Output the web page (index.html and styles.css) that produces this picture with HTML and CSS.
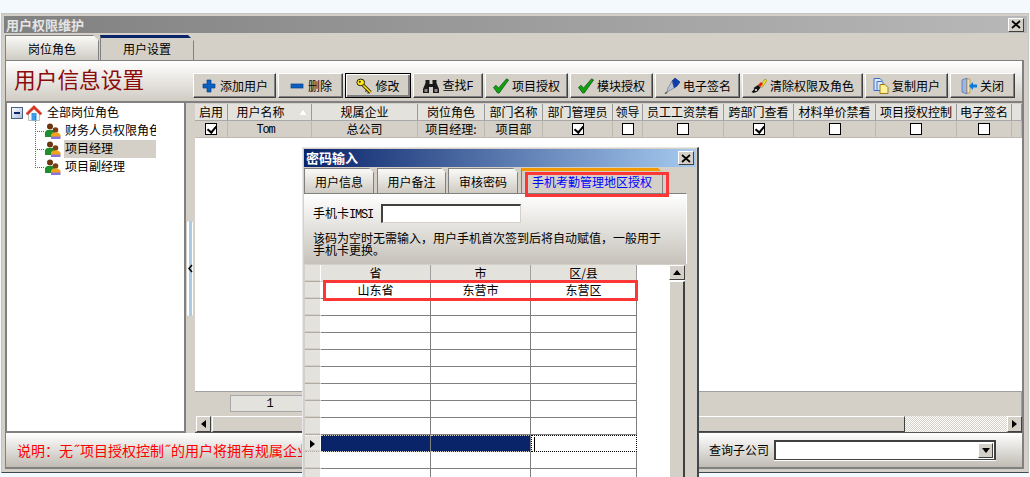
FILE: index.html
```html
<!DOCTYPE html>
<html lang="zh">
<head>
  <meta charset="UTF-8">
  <title>用户权限维护</title>
  <link rel="stylesheet" href="styles.css">
</head>
<body>

  <!-- Icons -->
  <svg class="icon-defs" aria-hidden="true">
    <symbol id="i-plus" viewBox="0 0 16 16"><path d="M6 2h4v4h4v4h-4v4H6v-4H2V6h4z" fill="#0b5fc0" stroke="#0a3f8a" stroke-width=".7"/></symbol>
    <symbol id="i-minus" viewBox="0 0 16 16"><rect x="2" y="6" width="12" height="4" fill="#0b5fc0" stroke="#0a3f8a" stroke-width=".7"/></symbol>
    <symbol id="i-key" viewBox="0 0 16 16"><path d="M7 7l7.5 7.5" stroke="#3a3000" stroke-width="3.2"/><path d="M7 7l7.5 7.5" stroke="#ffe81a" stroke-width="1.6"/><path d="M11 12l-1.6 1.6M13 14l-1.4 1.4" stroke="#3a3000" stroke-width="1.2"/><ellipse cx="4.7" cy="4.4" rx="3.9" ry="3.3" fill="#ffe81a" stroke="#222" stroke-width="1"/><circle cx="3.8" cy="3.8" r="1" fill="#222"/></symbol>
    <symbol id="i-find" viewBox="0 0 16 16"><path d="M2.500 2h4v4h3V2h4v3l2.500 6v4h-6V9H6v6H0v-4l2.500-6z" fill="#1a1a1a"/><rect x="1.500" y="11" width="3" height="3" fill="#8a8a8a"/><rect x="11.500" y="11" width="3" height="3" fill="#8a8a8a"/></symbol>
    <symbol id="i-check" viewBox="0 0 16 16"><path d="M.5 9.5l2.4-2.2 2.7 2.6L13.6.8l2 1.2L6.2 15H4.6z" fill="#0fa30f" stroke="#06490f" stroke-width=".7"/></symbol>
    <symbol id="i-pen" viewBox="0 0 16 16"><path d="M8 3l3-3 5 4-3 4-3 2z" fill="#0b3fb0" stroke="#06226a" stroke-width=".6"/><path d="M8 3l2 7-7 4 1-4z" fill="#b8c4dc" stroke="#667" stroke-width=".6"/><path d="M3 14l-2 2" stroke="#555" stroke-width="1.4"/></symbol>
    <symbol id="i-clear" viewBox="0 0 16 16"><path d="M9 8l5-7 2 1.5-5 7z" fill="#f3e21c" stroke="#7a6a00" stroke-width=".5"/><path d="M7 7l3-3 2 2-3 3z" fill="#e0201a"/><path d="M7 7l2.500 2.500-3 4-4 1.500-2-1 2-2 1-1-1-1z" fill="#111"/><circle cx="5" cy="12" r="1" fill="#fff"/></symbol>
    <symbol id="i-copy" viewBox="0 0 16 16"><path d="M1 .5h6l2 2v10H1z" fill="#dbe8fa" stroke="#3c6fc4"/><path d="M4 3.500h5l1 1v8H4z" fill="#dbe8fa" stroke="#3c6fc4"/><path d="M7 6.500h5l3 3v6H7z" fill="#fdf29a" stroke="#a27a10"/></symbol>
    <symbol id="i-door" viewBox="0 0 16 16"><path d="M1 2l5-2v16l-5-2z" fill="#9db6e4" stroke="#4a68a8" stroke-width=".7"/><path d="M6 1h3v14H6z" fill="#f0e2b0" stroke="#b08a30" stroke-width=".7"/><path d="M8 8l4-4v2.500h4v3h-4V12z" fill="#0b79e0"/></symbol>
    <symbol id="i-home" viewBox="0 0 16 16"><path d="M2.500 8v7.500h11V8L8 3z" fill="#f4f6fa" stroke="#a8a8a0" stroke-width=".7"/><rect x="5.500" y="8" width="5" height="7.500" fill="#3d9be8"/><path d="M0 8.500L8 .5l8 8-1.800 1.300L8 3.800 1.800 9.800z" fill="#e8321c" stroke="#9c1808" stroke-width=".5"/></symbol>
    <symbol id="i-user" viewBox="0 0 17 16"><circle cx="6" cy="3.500" r="3" fill="#6e3610"/><path d="M1 13V9l2-2h6l2 2v5H1z" fill="#1f8f2e"/><circle cx="11.500" cy="7" r="2.800" fill="#7a4014"/><path d="M7 14v-2.500l2-2h5l2.500 2V14z" fill="#f0a21c"/><rect x="7" y="13.500" width="9.500" height="2.500" fill="#8a74d8"/></symbol>
  </svg>

  <div class="window">
    <div class="titlebar">
      <span>用户权限维护</span>
      <span class="close-btn"><svg viewBox="0 0 10 9"><path d="M1 1l8 7M9 1L1 8" stroke="#000" stroke-width="1.700"/></svg></span>
    </div>

    <div class="tabs">
      <div class="tab">岗位角色</div>
      <div class="tab tab--active">用户设置</div>
    </div>

    <div class="panel">
      <!-- Toolbar -->
      <div class="head">
        <div class="head__title">用户信息设置</div>
        <div class="toolbar">
          <div class="btn"><svg class="ico"><use href="#i-plus"/></svg>添加用户</div>
          <div class="btn"><svg class="ico"><use href="#i-minus"/></svg>删除</div>
          <div class="btn btn--focus"><svg class="ico"><use href="#i-key"/></svg>修改</div>
          <div class="btn"><svg class="ico"><use href="#i-find"/></svg><span>查找<span class="mono">F</span></span></div>
          <div class="btn"><svg class="ico"><use href="#i-check"/></svg>项目授权</div>
          <div class="btn"><svg class="ico"><use href="#i-check"/></svg>模块授权</div>
          <div class="btn"><svg class="ico"><use href="#i-pen"/></svg>电子签名</div>
          <div class="btn"><svg class="ico"><use href="#i-clear"/></svg>清除权限及角色</div>
          <div class="btn"><svg class="ico"><use href="#i-copy"/></svg>复制用户</div>
          <div class="btn"><svg class="ico"><use href="#i-door"/></svg>关闭</div>
        </div>
      </div>

      <div class="main">
        <!-- Tree -->
        <div class="tree">
          <div class="tree__root">
            <span class="tree__toggle"></span>
            <svg class="ico"><use href="#i-home"/></svg>
            <span class="tree__text">全部岗位角色</span>
          </div>
          <div class="tree__children">
            <div class="tree__node"><span class="tree__dash"></span><svg class="ico ico--user"><use href="#i-user"/></svg><span class="tree__label">财务人员权限角色</span></div>
            <div class="tree__node"><span class="tree__dash"></span><svg class="ico ico--user"><use href="#i-user"/></svg><span class="tree__label tree__label--selected">项目经理</span></div>
            <div class="tree__node"><span class="tree__dash"></span><svg class="ico ico--user"><use href="#i-user"/></svg><span class="tree__label">项目副经理</span></div>
          </div>
        </div>

        <div class="splitter">
          <div class="splitter__handle"><svg viewBox="0 0 5 9"><path d="M4 1L1 4.500 4 8" fill="none" stroke="#000" stroke-width="1.500"/></svg></div>
        </div>

        <!-- Users grid -->
        <div class="users">
          <div class="users__row users__row--head">
            <div>启用</div>
            <div class="cell-sort">用户名称<span class="sort-mark"></span></div>
            <div>规属企业</div>
            <div>岗位角色</div>
            <div>部门名称</div>
            <div>部门管理员</div>
            <div>领导</div>
            <div>员工工资禁看</div>
            <div>跨部门查看</div>
            <div>材料单价禁看</div>
            <div>项目授权控制</div>
            <div>电子签名</div>
            <div></div>
          </div>
          <div class="users__row">
            <div><span class="cb cb--on"></span></div>
            <div class="mono mono--cell">Tom</div>
            <div>总公司</div>
            <div>项目经理:</div>
            <div>项目部</div>
            <div><span class="cb cb--on"></span></div>
            <div><span class="cb"></span></div>
            <div><span class="cb"></span></div>
            <div><span class="cb cb--on"></span></div>
            <div><span class="cb"></span></div>
            <div><span class="cb"></span></div>
            <div><span class="cb"></span></div>
            <div></div>
          </div>
          <div class="users__blank"></div>
          <div class="users__total"><div class="users__sum mono">1</div></div>
          <div class="hscroll">
            <span class="sbtn"><i class="tri tri--left"></i></span>
            <span class="hscroll__thumb"></span>
            <span class="hscroll__track"></span>
            <span class="sbtn"><i class="tri tri--right"></i></span>
          </div>
        </div>
      </div>

      <!-- Footer -->
      <div class="foot">
        <div class="foot__note">说明：无<span class="foot__quote">˝</span>项目授权控制<span class="foot__quote">˝</span>的用户将拥有规属企业的全部项目权限</div>
        <label class="foot__label">查询子公司</label>
        <div class="combo"><span class="combo__btn"><i class="tri tri--down"></i></span></div>
      </div>
    </div>
  </div>

  <!-- Dialog -->
  <div class="dialog">
    <div class="dialog__title">
      <span>密码输入</span>
      <span class="close-btn close-btn--dialog"><svg viewBox="0 0 10 9"><path d="M1 1l8 7M9 1L1 8" stroke="#000" stroke-width="1.700"/></svg></span>
    </div>
    <div class="dtabs">
      <div class="dtab">用户信息</div>
      <div class="dtab">用户备注</div>
      <div class="dtab">审核密码</div>
      <div class="dtab dtab--active">手机考勤管理地区授权</div>
    </div>
    <div class="dpanel">
      <div class="imsi">
        <span>手机卡<span class="mono">IMSI</span></span>
        <div class="imsi__input"></div>
      </div>
      <p class="dpanel__hint">该码为空时无需输入，用户手机首次签到后将自动赋值，一般用于手机卡更换。</p>
    </div>
    <div class="area">
      <div class="area__table">
        <div class="area__row area__row--head"><div></div><div>省</div><div>市</div><div>区/县</div></div>
        <div class="area__row"><div></div><div>山东省</div><div>东营市</div><div>东营区</div></div>
        <div class="area__row"><div></div><div></div><div></div><div></div></div>
        <div class="area__row"><div></div><div></div><div></div><div></div></div>
        <div class="area__row"><div></div><div></div><div></div><div></div></div>
        <div class="area__row"><div></div><div></div><div></div><div></div></div>
        <div class="area__row"><div></div><div></div><div></div><div></div></div>
        <div class="area__row"><div></div><div></div><div></div><div></div></div>
        <div class="area__row"><div></div><div></div><div></div><div></div></div>
        <div class="area__row"><div></div><div></div><div></div><div></div></div>
        <div class="area__row area__row--current"><div><i class="tri tri--right"></i></div><div></div><div></div><div class="area__edit"><span class="caret"></span></div></div>
        <div class="area__row"><div></div><div></div><div></div><div></div></div>
        <div class="area__row"><div></div><div></div><div></div><div></div></div>
      </div>
      <div class="vscroll">
        <span class="sbtn sbtn--v"><i class="tri tri--up"></i></span>
        <span class="vscroll__thumb"></span>
      </div>
    </div>
    <div class="mark mark--tab"></div>
    <div class="mark mark--row"></div>
  </div>

</body>
</html>
```

FILE: styles.css
```css
* {
  box-sizing: border-box;
}

html, body {
  height: 477px;
}

body {
  margin: 0;
  padding-top: 13px;
  position: relative;
  overflow: hidden;
  background: #f3f9fd;
  color: #000;
  font-family: "Noto Sans CJK SC", "Liberation Sans", sans-serif;
  font-size: 12px;
  line-height: 16px;
}

.icon-defs {
  position: absolute;
  width: 0;
  height: 0;
}

.mono {
  font-family: "Liberation Mono", monospace;
  font-size: 12px;
  letter-spacing: -1.2px;
}

.ico {
  width: 16px;
  height: 16px;
  flex: none;
}

.ico--user {
  width: 17px;
}

/* Window */
.window {
  width: 1028px;
  height: 460px;
  margin-left: 1px;
  padding: 2px;
  background: #d4d0c8;
  border: 1px solid #c4c4c4;
  border-bottom: 1px solid #404850;
}

.titlebar {
  height: 17px;
  margin-right: -1px;
  padding: 0 2px 0 2px;
  display: flex;
  justify-content: space-between;
  align-items: center;
  background: linear-gradient(to right, #808080, #b8b8b8);
  color: #e4e4e4;
  font-size: 13px;
  font-weight: 700;
}

.close-btn {
  width: 16px;
  height: 14px;
  display: flex;
  align-items: center;
  justify-content: center;
  background: #d4d0c8;
  border: 1px solid;
  border-color: #fff #404040 #404040 #fff;
}

.close-btn svg {
  width: 10px;
  height: 9px;
}

.titlebar .close-btn {
  margin-right: 1px;
}

/* Tabs */
.tabs {
  height: 27px;
  padding: 2px 0 0 1px;
  display: flex;
  gap: 1px;
}

.tab {
  width: 94px;
  height: 25px;
  padding-top: 5px;
  text-align: center;
  background: linear-gradient(#fafaf8, #cfcbc3);
  border: 1px solid #808080;
  border-bottom: 0;
  clip-path: polygon(0 0, calc(100% - 6px) 0, 100% 6px, 100% 100%, 0 100%);
}

.tab--active {
  padding-top: 3px;
  background: #d4d0c8;
  border-top: 3px solid #0a246a;
}

.panel {
  width: 1019px;
  margin-left: 1px;
  border: 1px solid #808080;
  border-width: 1px 2px 2px 1px;
}

.head {
  height: 40px;
  padding: 12px 0 3px 8px;
  display: flex;
  align-items: flex-end;
  background: linear-gradient(#fff, #d0ccc4);
}

.head__title {
  width: 179px;
  height: 36px;
  margin-top: -12px;
  padding-top: 3px;
  color: #8c0a0a;
  font-family: "Noto Sans CJK SC", serif;
  font-size: 21.700px;
  line-height: 30px;
  align-self: flex-start;
}

.toolbar {
  display: grid;
  grid-template-columns: 83px 65px 66px 70px 83px 83px 85px 121px 83px 65px;
  gap: 2px;
}

.btn {
  height: 25px;
  display: flex;
  align-items: center;
  justify-content: center;
  gap: 3px;
  background: #d4d0c8;
  border: 1px solid;
  border-color: #fff #404040 #404040 #fff;
  box-shadow: inset -1px -1px #808080;
  white-space: nowrap;
}

.btn--focus {
  outline: 1px solid #000;
  outline-offset: -1px;
  box-shadow: inset 1px 1px #fff, inset -2px -2px #808080;
}

/* Main row */
.main {
  height: 332px;
  display: flex;
  border-top: 2px solid #808080;
}

.tree {
  width: 180px;
  padding: 1px 0 0 4px;
  background: #fff;
  border: 2px solid #808080;
  border-top: 0;
  border-width: 0 2px 2px 1px;
}

.tree__root {
  height: 18px;
  display: flex;
  align-items: center;
}

.tree__root .ico {
  margin: 0 5px 0 3px;
}

.tree__text {
  line-height: 16px;
  margin-top: -2px;
}

.tree__toggle {
  width: 12px;
  height: 12px;
  position: relative;
  flex: none;
  background: linear-gradient(135deg, #fff, #a9bddc);
  border: 1px solid #47607f;
}

.tree__toggle::after {
  content: "";
  position: absolute;
  left: 2px;
  top: 4px;
  width: 6px;
  height: 2px;
  background: #0a246a;
}

.tree__children {
  position: relative;
  margin-left: 24px;
}

.tree__children::before {
  content: "";
  position: absolute;
  left: 0;
  top: -6px;
  bottom: 8px;
  border-left: 1px dotted #666;
}

.tree__node {
  height: 18px;
  display: flex;
  align-items: center;
}

.tree__dash {
  width: 9px;
  flex: none;
  border-bottom: 1px dotted #666;
}

.tree__label {
  width: 92px;
  height: 18px;
  margin-left: 3px;
  padding-left: 1px;
  overflow: hidden;
  white-space: nowrap;
  line-height: 16px;
}

.tree__label--selected {
  background: #d4d0c8;
}

.splitter {
  width: 9px;
  display: flex;
  align-items: center;
  background: #d4d0c8;
}

.splitter__handle {
  width: 6px;
  height: 95px;
  margin-left: 1px;
  display: flex;
  align-items: center;
  background: linear-gradient(to right, #fff 30%, #a9cbe4 35%, #a9cbe4 85%, #fff 90%);
  border-radius: 2px;
}

.splitter__handle svg {
  width: 5px;
  height: 9px;
  margin-left: 1px;
}

/* Users grid */
.users {
  flex: 1;
  display: flex;
  flex-direction: column;
  min-width: 0;
  background: #fff;
}

.users__row {
  height: 17px;
  flex: none;
  display: grid;
  grid-template-columns: 33px 84px 106px 67px 58px 70px 30px 81px 70px 82px 81px 55px 1fr;
  background: #d4d0c8;
  border-bottom: 1px solid #bdb9b1;
  text-align: center;
}

.users__row > div {
  display: flex;
  align-items: center;
  justify-content: center;
  white-space: nowrap;
  overflow: hidden;
  border-right: 1px solid #bdb9b1;
}

.users__row--head {
  height: 18px;
  background: #e4e2dc;
  border-top: 1px solid #d4d0c8;
  border-bottom: 1px solid #a8a8a8;
}

.users__row--head > div {
  border-right: 1px solid #9a9a9a;
}

.cell-sort {
  position: relative;
  padding-right: 18px;
}

.sort-mark {
  position: absolute;
  right: 4px;
  top: 5px;
  width: 0;
  height: 0;
  border: 4px solid transparent;
  border-top: 0;
  border-bottom: 6px solid #fff;
  filter: drop-shadow(0 0 .5px #999);
}

.users__row > .mono--cell {
  padding: 1px 8px 0 0;
}

.cb {
  width: 12px;
  height: 12px;
  position: relative;
  display: block;
  background: #fff;
  border: 1px solid #000;
}

.cb--on::after {
  content: "";
  position: absolute;
  left: 3px;
  top: 0;
  width: 4px;
  height: 7px;
  border: solid #000;
  border-width: 0 2px 2px 0;
  transform: rotate(40deg);
}

.users__blank {
  flex: 1;
}

.users__total {
  height: 25px;
  flex: none;
  padding: 3px 0 0 35px;
  background: #d4d0c8;
  border-top: 1px solid #a0a0a0;
  border-right: 1px solid #a0a0a0;
}

.users__sum {
  width: 120px;
  height: 17px;
  padding-right: 41px;
  background: #e4e2dc;
  border: 1px solid #a8a8a8;
  text-align: center;
}

.hscroll {
  height: 17px;
  flex: none;
  padding-left: 1px;
  display: flex;
  background: #d4d0c8;
  border-bottom: 1px solid #555;
}

.sbtn {
  width: 15px;
  height: 16px;
  flex: none;
  display: flex;
  align-items: center;
  justify-content: center;
  background: #d4d0c8;
  border: 1px solid;
  border-color: #fff #404040 #404040 #fff;
}

.hscroll__thumb {
  width: 693px;
  margin-left: 1px;
  background: #d4d0c8;
  border: 1px solid;
  border-color: #fff #404040 #404040 #fff;
}

.hscroll__track {
  flex: 1;
  background: repeating-conic-gradient(#fff 0 25%, #d4d0c8 0 50%) 0 0 / 2px 2px;
}

.tri {
  width: 0;
  height: 0;
  display: block;
  border: 4px solid transparent;
}

.tri--left {
  border-left: 0;
  border-right: 5px solid #000;
}

.tri--right {
  border-right: 0;
  border-left: 5px solid #000;
}

.tri--up {
  border-top: 0;
  border-bottom: 5px solid #000;
}

.tri--down {
  border-bottom: 0;
  border-top: 5px solid #000;
}

/* Footer */
.foot {
  height: 34px;
  padding: 0 26px 0 11px;
  display: flex;
  align-items: center;
  background: linear-gradient(#fff, #c0bcb4);
}

.foot__note {
  width: 300px;
  color: #f00;
  font-size: 14px;
  white-space: nowrap;
}

.foot__quote {
  width: 7px;
  display: inline-block;
  text-align: center;
}

.foot__label {
  margin-left: auto;
  margin-right: 5px;
}

.combo {
  width: 222px;
  height: 20px;
  padding: 1px 1px 1px 0;
  display: flex;
  justify-content: flex-end;
  background: #fff;
  border: 1px solid #404040;
  border-width: 2px 2px 1px 2px;
  box-shadow: 0 1px #fff;
}

.combo__btn {
  width: 15px;
  height: 15px;
  display: flex;
  align-items: center;
  justify-content: center;
  background: #d4d0c8;
  border: 1px solid;
  border-color: #fff #404040 #404040 #fff;
}

/* Dialog */
.dialog {
  position: absolute;
  left: 302px;
  top: 147px;
  width: 397px;
  height: 340px;
  padding: 1px;
  background: #d4d0c8;
  border: 1px solid #e8e8e8;
  border-right: 2px solid #404850;
}

.dialog__title {
  height: 18px;
  padding: 0 1px 0 2px;
  display: flex;
  justify-content: space-between;
  align-items: center;
  background: linear-gradient(to right, #0a246a, #a6caf0);
  color: #fff;
  font-size: 13px;
  font-weight: 700;
}

.close-btn--dialog {
  margin-right: 1px;
}

.dtabs {
  height: 26px;
  padding-top: 1px;
  display: flex;
  gap: 2px;
}

.dtab {
  width: 70px;
  height: 25px;
  padding-top: 5px;
  text-align: center;
  background: linear-gradient(#fafaf8, #cfcbc3);
  border: 1px solid #808080;
  border-bottom: 0;
  clip-path: polygon(0 0, calc(100% - 5px) 0, 100% 5px, 100% 100%, 0 100%);
}

.dtab:nth-child(2) {
  margin-left: 1px;
  width: 69px;
}

.dtab--active {
  width: 142px;
  margin-left: 1px;
  padding-top: 3px;
  color: #00f;
  background: #d4d0c8;
  border-top: 3px solid #f29a00;
}

.dpanel {
  width: 383px;
  height: 71px;
  padding: 10px 9px 0;
  background: linear-gradient(#fff, #c6c2ba);
  border-top: 1px solid #808080;
  border-right: 1px solid #fff;
}

.imsi {
  height: 19px;
  display: flex;
  align-items: center;
  gap: 8px;
}

.imsi__input {
  width: 140px;
  height: 19px;
  background: #fff;
  border: 1px solid;
  border-color: #404040 #d4d0c8 #d4d0c8 #404040;
  border-width: 2px 1px 1px 2px;
}

.dpanel__hint {
  margin: 9px 0 0;
  width: 350px;
  line-height: 12px;
}

.area {
  width: 380px;
  height: 230px;
  margin: 1px 0 0 1px;
  display: flex;
  background: #fff;
}

.area__table {
  flex: 1;
}

.area__row {
  width: 332px;
  height: 17px;
  display: grid;
  grid-template-columns: 16px 110px 100px 106px;
  text-align: center;
}

.area__row > div {
  display: flex;
  align-items: center;
  justify-content: center;
  border-right: 1px solid #808080;
  border-bottom: 1px solid #808080;
}

.area__row > div:first-child {
  background: #e4e2dc;
  border-color: #fff #fff #b0aca4 #e4e2dc;
  box-shadow: inset 0 -1px #d4d0c8;
}

.area__row--head > div {
  background: #e4e2dc;
  border-right-color: #a0a0a0;
  border-bottom-color: #d4d0c8;
}

.area__row--current > div {
  background: #0a246a;
  border: 0;
  border-top: 1px dotted #d4d0c8;
  border-bottom: 1px dotted #d4d0c8;
  border-right: 1px solid #808080;
}

.area__row--current > .area__edit {
  justify-content: flex-start;
  padding-left: 2px;
  background: #fff;
  border: 1px dotted #000;
}

.caret {
  width: 1px;
  height: 14px;
  background: #000;
}

.vscroll {
  width: 16px;
  flex: none;
  display: flex;
  flex-direction: column;
}

.sbtn--v {
  height: 15px;
  width: 16px;
}

.vscroll__thumb {
  flex: 1;
  margin-top: 1px;
  background: #d4d0c8;
  border: 1px solid;
  border-color: #fff #404040 #404040 #fff;
  border-right-width: 2px;
}

/* Red annotation boxes */
.mark {
  position: absolute;
  border: 3px solid #ff3636;
}

.mark--tab {
  left: 222px;
  top: 24px;
  width: 144px;
  height: 25px;
}

.mark--row {
  left: 20px;
  top: 132px;
  width: 315px;
  height: 21px;
}
```
